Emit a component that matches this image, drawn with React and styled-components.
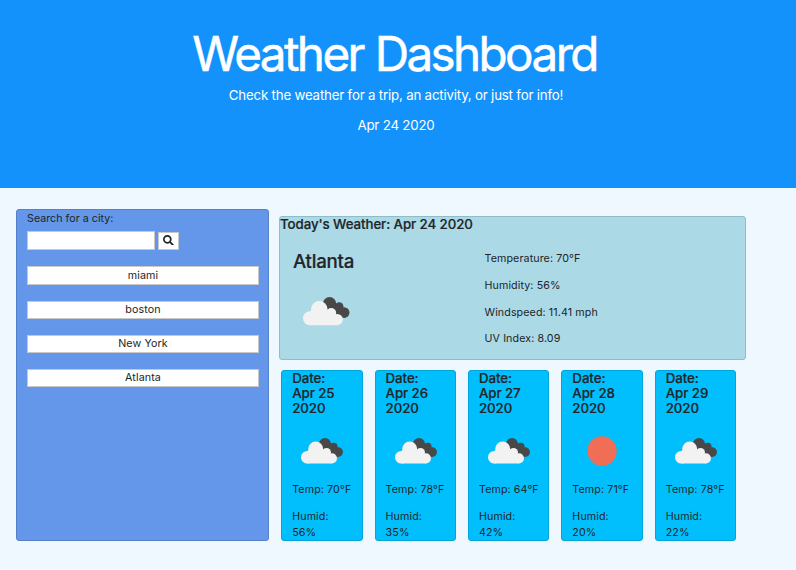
import React from "react";
import styled, { createGlobalStyle } from "styled-components";
import { FaSearch } from "react-icons/fa";

const GlobalStyle = createGlobalStyle`
  * { box-sizing: border-box; }
  html, body { margin: 0; background: #f0f8ff; }
  body {
    font-family: Inter, "Liberation Sans", sans-serif;
    font-size: 10.7px;
    line-height: 16px;
    letter-spacing: 0.1px;
    color: #212529;
    overflow: hidden;
  }
  h1, h2, h3, p { margin: 0; }
`;

const Hero = styled.header`
  height: 188px;
  padding-top: 24px;
  background: #1492fb;
  color: #fff;
  text-align: center;
  padding-right: 4px;
`;

const Title = styled.h1`
  font-size: 47.6px;
  line-height: 59px;
  font-weight: 400;
  letter-spacing: -2.6px;
  word-spacing: 1px;
  margin-left: -3px;
  -webkit-text-stroke: 0.5px #fff;
`;

const Lead = styled.p`
  margin-top: ${({ $gap }) => $gap}px;
  font-size: 13.3px;
  line-height: 20px;
  letter-spacing: -0.2px;
`;

const Main = styled.main`
  display: flex;
  align-items: flex-start;
  gap: 10px;
  padding: 21px 0 0 16px;
`;

const Sidebar = styled.aside`
  width: 253px;
  height: 332px;
  padding: 0 9px 0 10px;
  border: 1px solid #5581ca;
  border-radius: 3px;
  background: #6497e9;
`;

const Label = styled.label`
  display: block;
  height: 21px;
  padding-top: 1px;
  letter-spacing: 0.02px;
`;

const SearchRow = styled.div`
  display: flex;
  align-items: flex-end;
  gap: 3px;
  height: 19px;
  margin-bottom: 16px;
`;

const SearchInput = styled.input`
  width: 128px;
  height: 19px;
  padding: 0 4px;
  border: 1px solid #c8c8c8;
  background: #fff;
`;

const SearchButton = styled.button`
  display: flex;
  align-items: center;
  justify-content: center;
  width: 21px;
  height: 18px;
  padding: 0 0 2px;
  border: 1px solid #c8c8c8;
  background: #fff;
  color: #212529;
  font-size: 10.7px;
`;

const CityList = styled.div`
  display: grid;
  grid-template-rows: 35px 34px 34px 34px;
`;

const CityButton = styled.button`
  height: ${({ $first }) => ($first ? 19 : 18)}px;
  padding: 0;
  border: 1px solid #c8c8c8;
  background: #fff;
  color: #212529;
  font: inherit;
  letter-spacing: 0.1px;
  line-height: 16px;
`;

const Content = styled.section`
  width: 467px;
  padding-top: 7px;
`;

const Today = styled.article`
  height: 144px;
  border: 1px solid #8fbcc6;
  border-radius: 3px;
  background: #abd9e5;
`;

const Heading = styled.h3`
  font-size: 13.3px;
  line-height: 15px;
  font-weight: 500;
  letter-spacing: -0.08px;
  -webkit-text-stroke: 0.2px #212529;
`;

const TodayBody = styled.div`
  display: grid;
  grid-template-columns: 191.5px 1fr;
  padding: 18px 0 0 13px;
`;

const CityName = styled.h2`
  font-size: 18.7px;
  line-height: 24px;
  font-weight: 500;
  letter-spacing: -0.25px;
  -webkit-text-stroke: 0.2px #212529;
`;

const Readings = styled.div`
  display: grid;
  grid-auto-rows: 26.8px;
  padding-top: 1px;
`;

const TodayIcon = styled.div`
  display: flex;
  padding: 23px 0 0 10.4px;
`;

const Forecast = styled.div`
  display: grid;
  grid-template-columns: repeat(5, 81.4px);
  column-gap: 12px;
  padding: 10px 0 0 2.2px;
`;

const Day = styled.article`
  height: 171px;
  padding: 0 8px 0 10px;
  border: 1px solid #00a5dc;
  border-radius: 3px;
  background: #00bffc;
`;

const DayIcon = styled.div`
  display: flex;
  align-items: center;
  height: 54px;
  margin: 8px 0 4px;
  padding-left: ${({ $sun }) => ($sun ? 15 : 9)}px;
`;

const Reading = styled.p`
  margin-bottom: 11px;
`;

function Clouds({ width }) {
  return (
    <svg width={width} height={width * 0.614} viewBox="0 0 140 86">
      <g fill="#484848">
        <circle cx="80" cy="20" r="20" />
        <circle cx="109" cy="29" r="13" />
        <circle cx="124" cy="47" r="16" />
        <path d="M70 20h28l22 10v33H80z" />
      </g>
      <g fill="#f2f2f2">
        <circle cx="21" cy="64" r="21" />
        <circle cx="49" cy="37" r="25" />
        <circle cx="85" cy="48" r="15" />
        <circle cx="103" cy="68" r="17" />
        <path d="M21 43l28-20 23 20h25v20l6 22H21z" />
      </g>
    </svg>
  );
}

function Sun() {
  return (
    <svg width="30" height="30" viewBox="0 0 30 30">
      <circle cx="15" cy="15" r="14.7" fill="#ef6e55" />
    </svg>
  );
}

const cities = ["miami", "boston", "New York", "Atlanta"];
const readings = ["Temperature: 70°F", "Humidity: 56%", "Windspeed: 11.41 mph", "UV Index: 8.09"];
const days = [
  { date: 25, temp: 70, humid: 56 },
  { date: 26, temp: 78, humid: 35 },
  { date: 27, temp: 64, humid: 42 },
  { date: 28, temp: 71, humid: 20, sun: true },
  { date: 29, temp: 78, humid: 22 },
];

export default function App() {
  return (
    <>
      <GlobalStyle />
      <Hero>
        <Title>Weather Dashboard</Title>
        <Lead $gap={2}>Check the weather for a trip, an activity, or just for info!</Lead>
        <Lead $gap={10}>Apr 24 2020</Lead>
      </Hero>
      <Main>
        <Sidebar>
          <Label htmlFor="city">Search for a city:</Label>
          <SearchRow>
            <SearchInput id="city" />
            <SearchButton aria-label="Search"><FaSearch /></SearchButton>
          </SearchRow>
          <CityList>
            {cities.map((city, i) => <CityButton key={city} $first={i === 0}>{city}</CityButton>)}
          </CityList>
        </Sidebar>
        <Content>
          <Today>
            <Heading>Today's Weather: Apr 24 2020</Heading>
            <TodayBody>
              <div>
                <CityName>Atlanta</CityName>
                <TodayIcon><Clouds width={46.5} /></TodayIcon>
              </div>
              <Readings>
                {readings.map((text) => <p key={text}>{text}</p>)}
              </Readings>
            </TodayBody>
          </Today>
          <Forecast>
            {days.map((day) => (
              <Day key={day.date}>
                <Heading>Date:<br />Apr {day.date}<br />2020</Heading>
                <DayIcon $sun={day.sun}>{day.sun ? <Sun /> : <Clouds width={42} />}</DayIcon>
                <Reading>Temp: {day.temp}°F</Reading>
                <Reading>Humid:<br />{day.humid}%</Reading>
              </Day>
            ))}
          </Forecast>
        </Content>
      </Main>
    </>
  );
}
